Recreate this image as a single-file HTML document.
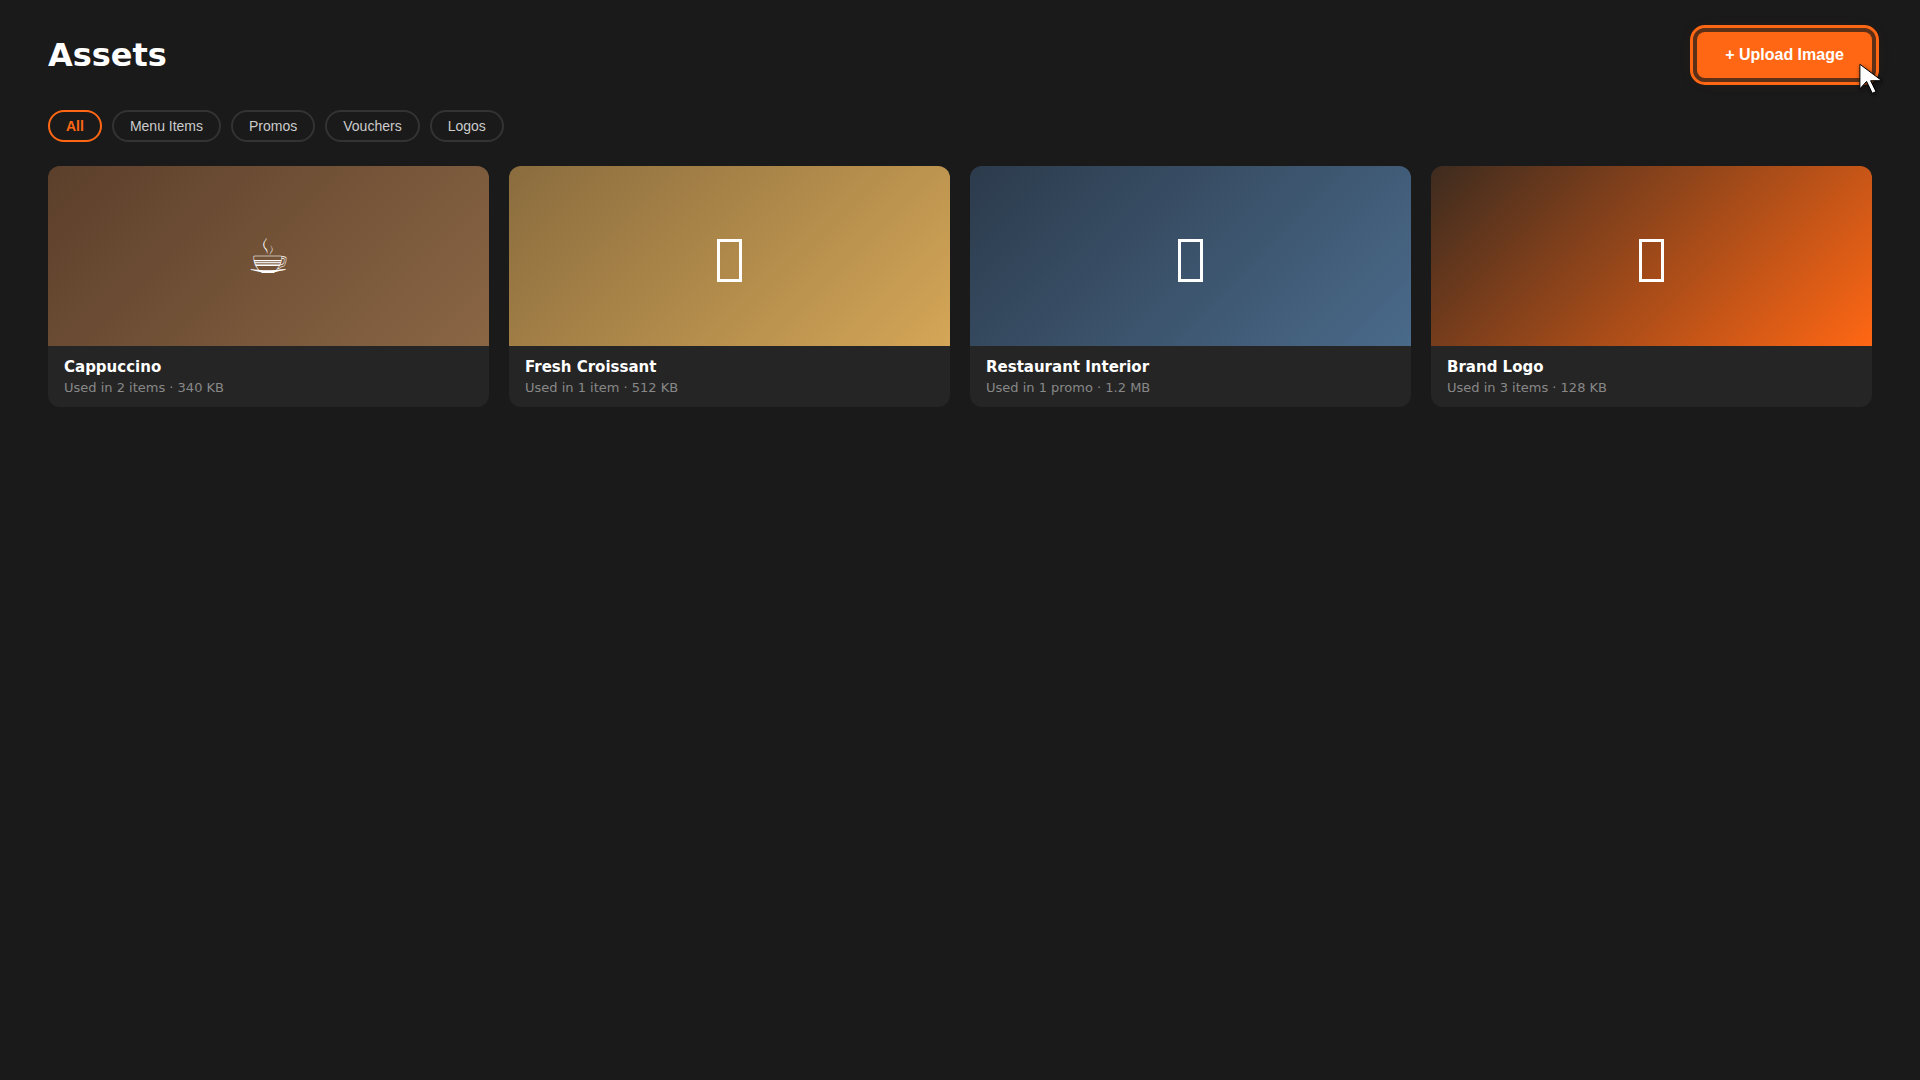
<!DOCTYPE html>
<html lang="en">
<head>
<meta charset="utf-8">
<title>Assets</title>
<style>
  * { box-sizing: border-box; margin: 0; padding: 0; }
  html, body { width: 1920px; height: 1080px; overflow: hidden; }
  body {
    background: #1a1a1a;
    color: #ffffff;
    font-family: "DejaVu Sans", "Liberation Sans", sans-serif;
    position: relative;
  }
  .page { position: absolute; left: 48px; top: 0; width: 1824px; }

  /* ---------- header ---------- */
  h1 {
    position: absolute; left: 0; top: 36px;
    font-size: 32px; line-height: 38px; font-weight: 700;
    white-space: nowrap;
  }
  button { appearance: none; -webkit-appearance: none; margin: 0; cursor: pointer; display: block; }
  .upload {
    position: absolute; left: 1649px; top: 32px;
    width: 175px; height: 46px;
    border: 0; border-radius: 8px;
    background: #ff6714; color: #fff;
    font-family: "Liberation Sans", sans-serif;
    font-size: 16px; font-weight: 700; padding: 0;
    text-align: center; line-height: 46px;
    outline: 3px solid #ff6714; outline-offset: 4px;
    box-shadow: 0 0 0 4px rgba(255,103,20,.27), 0 0 20px rgba(255,103,20,.1);
  }

  /* ---------- chips ---------- */
  .chips { position: absolute; left: 0; top: 110px; display: flex; gap: 10px; }
  .chip {
    height: 32px; padding: 0 16px;
    border: 2px solid #333333; border-radius: 16px;
    background: transparent; color: #cccccc;
    font-family: "Liberation Sans", sans-serif;
    font-size: 14px; line-height: 28px; white-space: nowrap;
  }
  .chip.on { border-color: #ff6714; color: #ff6714; font-weight: 700; }

  /* ---------- cards ---------- */
  .grid {
    position: absolute; left: 0; top: 166px; width: 1824px;
    display: grid; grid-template-columns: repeat(4, 441px); gap: 20px;
  }
  .card { height: 241px; border-radius: 12px; overflow: hidden; background: #252525; }
  .thumb { height: 180px; position: relative; }
  .t1 { background: linear-gradient(135deg, #5c3f2b, #8a6644); }
  .t2 { background: linear-gradient(135deg, #8a6c3e, #d4a657); }
  .t3 { background: linear-gradient(135deg, #2c3b4c, #4a6a8a); }
  .t4 { background: linear-gradient(135deg, #3d2b1f, #ff6714); }
  .cup {
    position: absolute; left: 0; right: 0; top: 62px;
    text-align: center; font-size: 48px; line-height: 56px;
    font-family: "DejaVu Sans", sans-serif; color: #fff;
  }
  .tofu {
    position: absolute; left: 208px; top: 73px; width: 25px; height: 43px;
    border: 3px solid #fff;
  }
  .info { padding: 12px 16px; }
  .name { font-size: 15px; font-weight: 700; line-height: 18px; color: #fff; }
  .meta { font-size: 13px; line-height: 15px; color: #888; margin-top: 4px; }

  /* ---------- cursor ---------- */
  .cursor { position: absolute; left: 1850px; top: 56px; width: 44px; height: 48px; overflow: visible; }
</style>
</head>
<body>
<div class="page">
  <h1>Assets</h1>
  <button type="button" class="upload">+ Upload Image</button>

  <nav class="chips">
    <button type="button" class="chip on">All</button>
    <button type="button" class="chip">Menu Items</button>
    <button type="button" class="chip">Promos</button>
    <button type="button" class="chip">Vouchers</button>
    <button type="button" class="chip">Logos</button>
  </nav>

  <main class="grid">
    <div class="card">
      <div class="thumb t1"><div class="cup">&#9749;</div></div>
      <div class="info"><div class="name">Cappuccino</div><div class="meta">Used in 2 items · 340 KB</div></div>
    </div>
    <div class="card">
      <div class="thumb t2"><div class="tofu"></div></div>
      <div class="info"><div class="name">Fresh Croissant</div><div class="meta">Used in 1 item · 512 KB</div></div>
    </div>
    <div class="card">
      <div class="thumb t3"><div class="tofu"></div></div>
      <div class="info"><div class="name">Restaurant Interior</div><div class="meta">Used in 1 promo · 1.2 MB</div></div>
    </div>
    <div class="card">
      <div class="thumb t4"><div class="tofu"></div></div>
      <div class="info"><div class="name">Brand Logo</div><div class="meta">Used in 3 items · 128 KB</div></div>
    </div>
  </main>
</div>

<svg class="cursor" viewBox="0 0 44 48">
  <defs>
    <filter id="cs" x="-50%" y="-50%" width="200%" height="200%">
      <feGaussianBlur in="SourceAlpha" stdDeviation="2.4"/>
      <feOffset dx="1" dy="2"/>
      <feComponentTransfer><feFuncA type="linear" slope=".55"/></feComponentTransfer>
      <feMerge><feMergeNode/><feMergeNode in="SourceGraphic"/></feMerge>
    </filter>
  </defs>
  <polygon filter="url(#cs)" points="9.9,8.3 9.9,32.8 16.6,25.4 22.3,37.3 26.0,35.6 20.6,24.7 31.9,24.7"
           fill="#fff" stroke="#000" stroke-width="1" stroke-linejoin="miter"/>
</svg>
</body>
</html>
